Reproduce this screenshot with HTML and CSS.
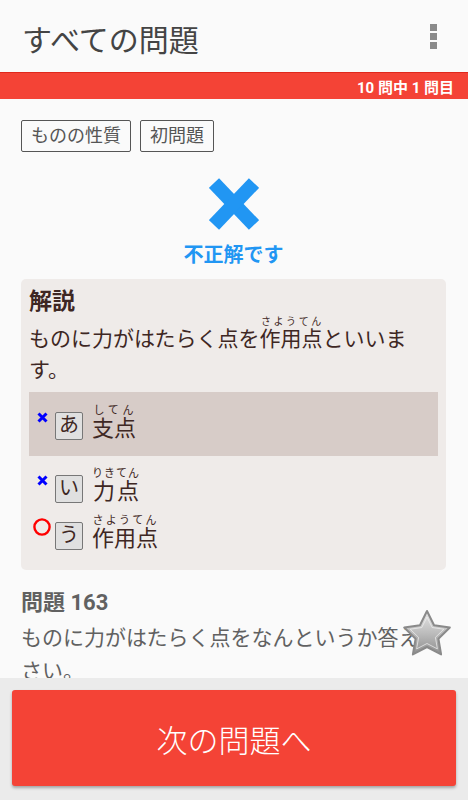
FILE: index.html
```html
<!DOCTYPE html>
<html lang="ja">
<head>
    <meta charset="UTF-8">
    <meta name="viewport" content="width=device-width, initial-scale=1.0">
    <title>すべての問題</title>
    <link rel="stylesheet" href="styles.css">
</head>
<body>
    <div class="app">
        <header class="toolbar">
            <h1>すべての問題</h1>
            <div class="menu">
                <span></span><span></span><span></span>
            </div>
        </header>
        <div class="progress">10 問中 1 問目</div>

        <main class="content">
            <div class="tags">
                <span class="tag">ものの性質</span>
                <span class="tag">初問題</span>
            </div>

            <div class="result">
                <svg class="result-mark" width="50" height="52" viewBox="0 0 50 52">
                    <line x1="5" y1="5" x2="45" y2="47" stroke="#2196f3" stroke-width="14"/>
                    <line x1="45" y1="5" x2="5" y2="47" stroke="#2196f3" stroke-width="14"/>
                </svg>
                <div class="result-text">不正解です</div>
            </div>

            <section class="explain">
                <h2>解説</h2>
                <p>ものに力がはたらく点を<ruby>作用点<rt>さようてん</rt></ruby>といいます。</p>

                <div class="choice selected">
                    <div class="mark">
                        <svg width="11" height="11" viewBox="0 0 11 11">
                            <path d="M1.5 1.5 L9.5 9.5 M9.5 1.5 L1.5 9.5" stroke="#0000ff" stroke-width="3"/>
                        </svg>
                    </div>
                    <span class="key">あ</span>
                    <ruby class="answer">支点<rt>してん</rt></ruby>
                </div>
                <div class="choice">
                    <div class="mark">
                        <svg width="11" height="11" viewBox="0 0 11 11">
                            <path d="M1.5 1.5 L9.5 9.5 M9.5 1.5 L1.5 9.5" stroke="#0000ff" stroke-width="3"/>
                        </svg>
                    </div>
                    <span class="key">い</span>
                    <ruby class="answer">力点<rt>りきてん</rt></ruby>
                </div>
                <div class="choice">
                    <div class="mark circle">
                        <svg width="18" height="18" viewBox="0 0 18 18">
                            <circle cx="9" cy="9" r="7.6" fill="none" stroke="#ff0000" stroke-width="2.4"/>
                        </svg>
                    </div>
                    <span class="key">う</span>
                    <ruby class="answer">作用点<rt>さようてん</rt></ruby>
                </div>
            </section>

            <section class="question">
                <h3>問題 163</h3>
                <p>ものに力がはたらく点をなんというか答えなさい。</p>
                <svg class="star" width="52" height="52" viewBox="0 0 52 52">
                    <defs>
                        <linearGradient id="starFill" x1="0" y1="0" x2="0" y2="1">
                            <stop offset="0" stop-color="#e6e6e6"/>
                            <stop offset="0.5" stop-color="#bdbdbd"/>
                            <stop offset="1" stop-color="#8e8e8e"/>
                        </linearGradient>
                    </defs>
                    <polygon points="26,3 33.05,17.29 48.83,19.58 37.41,30.71 40.11,46.42 26,39 11.89,46.42 14.59,30.71 3.17,19.58 18.95,17.29"
                        fill="url(#starFill)" stroke="#8a8a8a" stroke-width="2" stroke-linejoin="round"/>
                    <polygon points="26,9 31.2,19.5 42.8,21.2 34.4,29.4 36.4,40.9 26,35.5 15.6,40.9 17.6,29.4 9.2,21.2 20.8,19.5"
                        fill="none" stroke="#f2f2f2" stroke-width="1" stroke-linejoin="round" opacity="0.7"/>
                </svg>
            </section>
        </main>

        <footer class="footer">
            <button class="next">次の問題へ</button>
        </footer>
    </div>
</body>
</html>
```

FILE: styles.css
```css
body {
    margin: 0;
    font-family: Roboto, "Noto Sans CJK JP", sans-serif;
    background: #fafafa;
}

.app {
    height: 800px;
    display: flex;
    flex-direction: column;
    overflow: hidden;
}

.toolbar {
    height: 72px;
    flex-shrink: 0;
    display: flex;
    align-items: center;
    justify-content: space-between;
    padding: 4px 31px 0 22px;
    box-sizing: border-box;
}

.toolbar h1 {
    margin: 0;
    font-size: 30px;
    font-weight: normal;
    color: #444;
}

.menu {
    display: flex;
    flex-direction: column;
    gap: 2px;
    margin-top: -4px;
}

.menu span {
    width: 7px;
    height: 7px;
    background: #8a8a8a;
}

.progress {
    height: 27px;
    flex-shrink: 0;
    box-sizing: border-box;
    background: #f44336;
    border-top: 1px solid #e0281c;
    color: white;
    font-size: 15px;
    font-weight: bold;
    text-align: right;
    padding: 3px 14px 0 0;
}

.content {
    flex: 1;
    overflow: hidden;
    padding: 0 22px 0 21px;
}

.tags {
    display: flex;
    gap: 9px;
    margin-top: 21px;
}

.tag {
    border: 1px solid #555;
    border-radius: 2px;
    padding: 0 9px;
    height: 30px;
    line-height: 30px;
    font-size: 18px;
    color: #555;
}

.result {
    display: flex;
    flex-direction: column;
    align-items: center;
    margin-top: 26px;
}

.result-mark {
    display: block;
}

.result-text {
    color: #2196f3;
    font-size: 20px;
    font-weight: bold;
    line-height: 30px;
    margin-top: 10px;
}

.explain {
    margin-top: 9px;
    background: #efebe9;
    border-radius: 5px;
    padding: 8px 8px 20px;
    color: #3e2723;
}

.explain h2 {
    margin: 0;
    font-size: 23px;
    line-height: 30px;
}

.explain p {
    margin: -1px 0 6px;
    font-size: 21px;
    line-height: 31px;
}

.explain rt {
    font-size: 10px;
}

.choice {
    display: flex;
    align-items: flex-end;
    height: 47px;
}

.choice.selected {
    height: 64px;
    padding-bottom: 16px;
    box-sizing: border-box;
    background: #d7ccc8;
}

.mark {
    width: 26px;
    display: flex;
    justify-content: center;
    margin-bottom: 17px;
}

.mark svg {
    display: block;
}

.mark.circle {
    margin-bottom: 14px;
}

.key {
    width: 26px;
    height: 26px;
    border: 1px solid #777;
    border-radius: 2px;
    background: #e0e0e0;
    font-size: 20px;
    line-height: 25px;
    text-align: center;
    color: #3e2723;
}

.answer {
    margin-left: 9px;
    font-size: 22px;
    line-height: 28px;
    margin-bottom: -3px;
}

.answer rt {
    font-size: 11px;
    letter-spacing: 1px;
}

.question {
    position: relative;
    margin-top: 18px;
    color: #616161;
}

.question h3 {
    margin: 0;
    font-size: 22px;
    line-height: 30px;
}

.question p {
    margin: 4px 0 0;
    font-size: 21px;
    line-height: 33px;
}

.star {
    position: absolute;
    right: -7px;
    top: 20px;
}

.footer {
    height: 122px;
    flex-shrink: 0;
    box-sizing: border-box;
    background: #ebebeb;
    padding: 12px 12px 14px;
}

.next {
    width: 100%;
    height: 96px;
    border: none;
    border-radius: 3px;
    background: #f44336;
    color: white;
    font-family: Roboto, "Noto Sans CJK JP", sans-serif;
    font-size: 31px;
    font-weight: 300;
    box-shadow: 0 2px 3px rgba(0, 0, 0, 0.3);
}
```
